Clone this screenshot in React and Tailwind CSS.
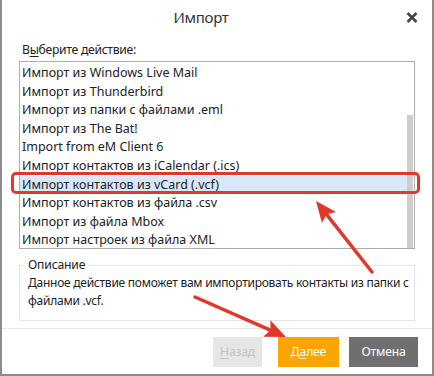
import React from "react";

const items = [
  "Импорт из Windows Live Mail",
  "Импорт из Thunderbird",
  "Импорт из папки с файлами .eml",
  "Импорт из The Bat!",
  "Import from eM Client 6",
  "Импорт контактов из iCalendar (.ics)",
  "Импорт контактов из vCard (.vcf)",
  "Импорт контактов из файла .csv",
  "Импорт из файла Mbox",
  "Импорт настроек из файла XML",
];

// red annotation arrow, head computed from direction
function Arrow({ x1, y1, x2, y2 }) {
  const dx = x2 - x1;
  const dy = y2 - y1;
  const len = Math.hypot(dx, dy);
  const ux = dx / len;
  const uy = dy / len;
  const hl = 21;
  const hw = 9;
  const bx = x2 - ux * hl;
  const by = y2 - uy * hl;
  const pts = [
    [x2, y2],
    [bx - uy * hw, by + ux * hw],
    [bx + ux * 4, by + uy * 4],
    [bx + uy * hw, by - ux * hw],
  ]
    .map((p) => p.join(","))
    .join(" ");
  return (
    <g>
      <line x1={x1} y1={y1} x2={bx + ux * 5} y2={by + uy * 5} stroke="#e2382b" strokeWidth="3.5" strokeLinecap="round" />
      <polygon points={pts} fill="#e2382b" />
    </g>
  );
}

export default function App() {
  return (
    <div
      className="relative w-[434px] h-[376px] bg-white border-x-2 border-b-2 border-[#8c8c8c] text-[#222] overflow-hidden"
      style={{ fontFamily: '"Noto Sans", "Open Sans", sans-serif' }}
    >
      {/* title bar */}
      <div className="flex items-center h-[34px]">
        <div className="flex-1 text-center text-[15px] tracking-[-0.3px] text-[#333] pl-[4px]">Импорт</div>
        <div className="w-[36px] flex justify-center pr-[4px]">
          <svg width="12" height="11" viewBox="0 0 12 11">
            <path d="M1.5 1 L10.5 10 M10.5 1 L1.5 10" stroke="#444" strokeWidth="2.6" />
          </svg>
        </div>
      </div>

      <div className="px-[17px]">
        <div className="mt-[7px] text-[12.2px] tracking-[-0.3px] leading-[18px] pl-[3px]">
          В<span className="underline underline-offset-2">ы</span>берите действие:
        </div>

        {/* list box */}
        <div className="mt-[2px] h-[188px] border border-[#adadad] flex overflow-hidden">
          <div className="flex-1 min-w-0 pt-[2px]">
            {items.map((t, i) => (
              <div
                key={t}
                className={
                  "h-[18.6px] leading-[18.6px] pl-[2px] text-[12.5px] whitespace-nowrap " +
                  (i === 6 ? "bg-[#d9e8f8]" : "")
                }
              >
                {t}
              </div>
            ))}
          </div>
          <div className="w-[6px] mr-[1px] pt-[53px] flex flex-col">
            <div className="flex-1 bg-[#cdcdcd]" />
          </div>
        </div>

        {/* description */}
        <fieldset className="mt-[7px] border border-[#e4e4e4] pl-[4px] pr-0 pb-[10px]">
          <legend className="px-[4px] text-[12.2px] tracking-[-0.2px] leading-[18px]">Описание</legend>
          <div className="pl-[4px] text-[12px] tracking-[-0.25px] leading-[18px]">
            Данное действие поможет вам импортировать контакты из папки с файлами .vcf.
          </div>
        </fieldset>
      </div>

      <div className="mt-[7px] border-t border-[#e8e8e8]" />

      {/* buttons */}
      <div className="mt-[8px] flex justify-end pr-[14px] text-[12.2px] tracking-[-0.2px]">
        <div className="w-[49px] h-[30px] flex items-center justify-center bg-[#e6e6e6] text-[#c3c3c3]">
          <span>
            <span className="underline underline-offset-2">Н</span>азад
          </span>
        </div>
        <div className="ml-[16px] w-[61px] h-[30px] flex items-center justify-center bg-[#fba500] text-white">
          <span>
            Д<span className="underline underline-offset-2">а</span>лее
          </span>
        </div>
        <div className="ml-[10px] w-[69px] h-[30px] flex items-center justify-center bg-[#6f6f6f] text-white">
          Отмена
        </div>
      </div>

      {/* annotations */}
      <div className="absolute left-[9px] top-[172px] w-[409px] h-[22px] border-[3px] border-[#e2382b] rounded-[5px] pointer-events-none" />
      <svg className="absolute left-0 top-0 pointer-events-none" width="434" height="376">
        <Arrow x1={370} y1={272} x2={314} y2={201} />
        <Arrow x1={193} y1={297} x2={284} y2={337} />
      </svg>
    </div>
  );
}
